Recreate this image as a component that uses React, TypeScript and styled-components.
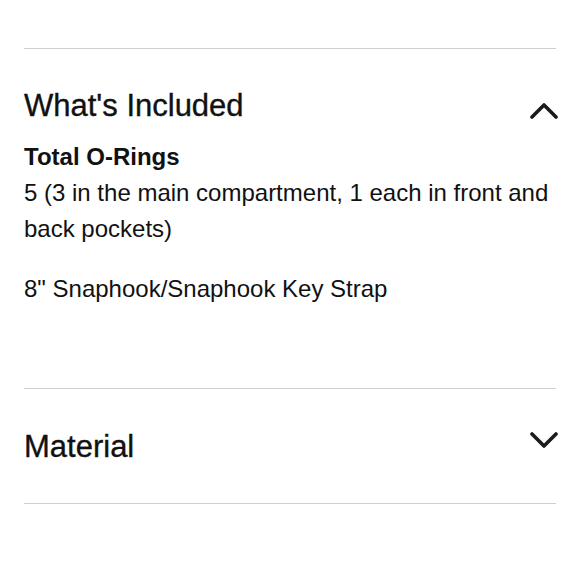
import React from "react";
import styled, { createGlobalStyle } from "styled-components";

const Global = createGlobalStyle`
  html, body { margin: 0; padding: 0; background: #fff; }
  body { font-family: "Liberation Sans", Arial, Helvetica, sans-serif; color: #111; }
`;

const Page = styled.div`
  padding: 48px 24px 0 24px;
  width: 532px;
`;

const Section = styled.section<{ $first?: boolean }>`
  border-top: ${(p) => (p.$first ? "1px solid #cfcfcf" : "none")};
  border-bottom: 1px solid #cfcfcf;
`;

const Header = styled.div<{ $pt: number; $pb: number }>`
  display: flex;
  justify-content: space-between;
  align-items: flex-start;
  padding-top: ${(p) => p.$pt}px;
  padding-bottom: ${(p) => p.$pb}px;
`;

const Title = styled.h2`
  margin: 0;
  font-size: 31px;
  line-height: 36px;
  font-weight: 400;
  color: #111;
  -webkit-text-stroke: 0.35px #111;
`;

const Chevron = styled.svg<{ $mt: number }>`
  margin-top: ${(p) => p.$mt}px;
  margin-right: -2px;
  flex: none;
`;

const Body = styled.div`
  padding-top: 15px;
  padding-bottom: 81px;
`;

const Label = styled.div`
  font-size: 24px;
  line-height: 36px;
  font-weight: 700;
`;

const Para = styled.p<{ $mt?: number }>`
  margin: ${(p) => p.$mt ?? 0}px 0 0 0;
  font-size: 24px;
  line-height: 36px;
`;

function ChevronIcon({ up, mt }: { up: boolean; mt: number }) {
  return (
    <Chevron $mt={mt} width="28" height="16" viewBox="0 0 28 16" fill="none">
      <polyline
        points={up ? "2,14 14,2 26,14" : "2,2 14,14 26,2"}
        stroke="#1b1b1f"
        strokeWidth="3.6"
        strokeLinecap="round"
        strokeLinejoin="round"
      />
    </Chevron>
  );
}

export default function App() {
  return (
    <>
      <Global />
      <Page>
        <Section $first>
          <Header $pt={39} $pb={0}>
            <Title>What's Included</Title>
            <ChevronIcon up mt={15} />
          </Header>
          <Body>
            <Label>Total O-Rings</Label>
            <Para>5 (3 in the main compartment, 1 each in front and back pockets)</Para>
            <Para $mt={24}>8" Snaphook/Snaphook Key Strap</Para>
          </Body>
        </Section>
        <Section>
          <Header $pt={40} $pb={38}>
            <Title>Material</Title>
            <ChevronIcon up={false} mt={3} />
          </Header>
        </Section>
      </Page>
    </>
  );
}
